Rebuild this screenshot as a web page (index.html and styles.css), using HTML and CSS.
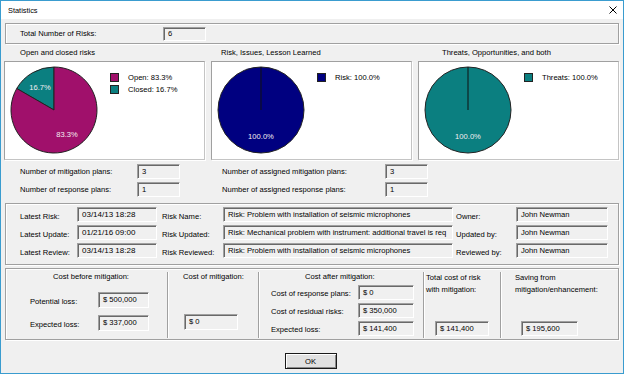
FILE: index.html
```html
<!DOCTYPE html>
<html lang="en">
<head>
  <meta charset="UTF-8" />
  <title>Statistics</title>
  <link rel="stylesheet" href="styles.css">
</head>
<body>
  <div class="window">
    <div class="titlebar">
      <span>Statistics</span>
      <svg class="close" width="8" height="8" viewBox="0 0 8 8">
        <path d="M0.5 0.5 L7.5 7.5 M7.5 0.5 L0.5 7.5" stroke="#000" stroke-width="1" fill="none"/>
      </svg>
    </div>

    <div class="main">
      <div class="box total">
        <span class="total-label">Total Number of Risks:</span>
        <span class="field total-field">6</span>
      </div>

      <div class="charts">
        <div class="chart">
          <div class="chart-title t1">Open and closed risks</div>
          <div class="panel">
            <svg class="pie" width="104" height="97" viewBox="0 0 104 97">
              <path d="M49 48 L49 5 A43 43 0 0 0 11.76 26.5 Z" fill="#0b7f80" stroke="#222" stroke-width="1"/>
              <path d="M49 48 L11.76 26.5 A43 43 0 1 0 49 5 Z" fill="#a0106b" stroke="#222" stroke-width="1"/>
              <text x="35" y="28" class="pie-label">16.7%</text>
              <text x="62" y="75" class="pie-label">83.3%</text>
            </svg>
            <ul class="legend">
              <li><i class="swatch magenta"></i>Open: 83.3%</li>
              <li><i class="swatch teal"></i>Closed: 16.7%</li>
            </ul>
          </div>
        </div>

        <div class="chart">
          <div class="chart-title t2">Risk, Issues, Lesson Learned</div>
          <div class="panel">
            <svg class="pie" width="104" height="97" viewBox="0 0 104 97">
              <circle cx="49" cy="48" r="43" fill="#000080" stroke="#222" stroke-width="1"/>
              <path d="M49 48 L49 5" stroke="#111" stroke-width="1"/>
              <text x="49" y="77" class="pie-label">100.0%</text>
            </svg>
            <ul class="legend">
              <li><i class="swatch navy"></i>Risk: 100.0%</li>
            </ul>
          </div>
        </div>

        <div class="chart">
          <div class="chart-title t3">Threats, Opportunities, and both</div>
          <div class="panel">
            <svg class="pie" width="104" height="97" viewBox="0 0 104 97">
              <circle cx="49" cy="48" r="43" fill="#0b7f80" stroke="#222" stroke-width="1"/>
              <path d="M49 48 L49 5" stroke="#111" stroke-width="1"/>
              <text x="49" y="77" class="pie-label">100.0%</text>
            </svg>
            <ul class="legend">
              <li><i class="swatch teal"></i>Threats: 100.0%</li>
            </ul>
          </div>
        </div>
      </div>

      <div class="plans">
        <span>Number of mitigation plans:</span>
        <span class="field small">3</span>
        <span>Number of assigned mitigation plans:</span>
        <span class="field small">3</span>
        <span>Number of response plans:</span>
        <span class="field small">1</span>
        <span>Number of assigned response plans:</span>
        <span class="field small">1</span>
      </div>

      <div class="box details">
        <span>Latest Risk:</span>
        <span class="field date">03/14/13 18:28</span>
        <span>Risk Name:</span>
        <span class="field name">Risk: Problem with installation of seismic microphones</span>
        <span>Owner:</span>
        <span class="field person">John Newman</span>

        <span>Latest Update:</span>
        <span class="field date">01/21/16 09:00</span>
        <span>Risk Updated:</span>
        <span class="field name">Risk: Mechanical problem with instrument: additional travel is req</span>
        <span>Updated by:</span>
        <span class="field person">John Newman</span>

        <span>Latest Review:</span>
        <span class="field date">03/14/13 18:28</span>
        <span>Risk Reviewed:</span>
        <span class="field name">Risk: Problem with installation of seismic microphones</span>
        <span>Reviewed by:</span>
        <span class="field person">John Newman</span>
      </div>

      <div class="box costs">
        <div class="col col-before">
          <div class="col-title">Cost before mitigation:</div>
          <div class="cost-row first">
            <span class="cost-label">Potential loss:</span>
            <span class="field money">$ 500,000</span>
          </div>
          <div class="cost-row">
            <span class="cost-label">Expected loss:</span>
            <span class="field money">$ 337,000</span>
          </div>
        </div>

        <div class="col col-mitigation">
          <div class="col-title">Cost of mitigation:</div>
          <span class="field money">$ 0</span>
        </div>

        <div class="col col-after">
          <div class="col-title">Cost after mitigation:</div>
          <div class="cost-row first">
            <span class="cost-label">Cost of response plans:</span>
            <span class="field money">$ 0</span>
          </div>
          <div class="cost-row">
            <span class="cost-label">Cost of residual risks:</span>
            <span class="field money">$ 350,000</span>
          </div>
          <div class="cost-row">
            <span class="cost-label">Expected loss:</span>
            <span class="field money">$ 141,400</span>
          </div>
        </div>

        <div class="col col-total">
          <div class="col-title">Total cost of risk<br>with mitigation:</div>
          <span class="field money">$ 141,400</span>
        </div>

        <div class="col col-saving">
          <div class="col-title">Saving from<br>mitigation/enhancement:</div>
          <span class="field money">$ 195,600</span>
        </div>
      </div>

      <div class="buttons">
        <button class="ok">OK</button>
      </div>
    </div>
  </div>
</body>
</html>
```

FILE: styles.css
```css
* {
  box-sizing: border-box;
}

body {
  margin: 0;
  font-family: "Liberation Sans", Arial, sans-serif;
  font-size: 7.6px;
  color: #000;
  background: #fff;
}

.window {
  width: 624px;
  height: 374px;
  border: 1px solid #3a9ccf;
  background: #f0f0f0;
}

.titlebar {
  height: 18px;
  background: #fff;
  display: flex;
  align-items: center;
  justify-content: space-between;
  padding: 0 6px 0 7px;
  font-size: 7.4px;
}

.main {
  padding: 4px 4px 0;
}

/* etched group box */
.box {
  border: 1px solid #a0a0a0;
  box-shadow: inset 1px 1px 0 #fff, 1px 1px 0 #fff;
}

/* sunken read-only edit */
.field {
  display: block;
  height: 15px;
  line-height: 13px;
  padding-left: 4px;
  white-space: nowrap;
  overflow: hidden;
  background: #f0f0f0;
  border: 1px solid;
  border-color: #a0a0a0 #fff #fff #a0a0a0;
  box-shadow: inset 1px 1px 0 #696969;
}

.total {
  height: 21px;
  display: flex;
  align-items: center;
  padding-left: 14px;
}

.total-label {
  width: 143px;
}

.total-field {
  width: 43px;
  height: 14px;
  line-height: 12px;
}

/* charts */
.charts {
  display: flex;
  gap: 6px;
  margin: 1px 0 0 -1px;
}

.chart {
  width: 201px;
}

.chart-title {
  height: 16px;
  line-height: 16px;
}

.t1 { padding-left: 16px; }
.t2 { padding-left: 10px; }
.t3 { padding-left: 24px; }

.panel {
  height: 99px;
  display: flex;
  background: #fff;
  border: 1px solid;
  border-color: #a0a0a0 #c4c4c4 #c4c4c4 #a0a0a0;
  box-shadow: 1px 1px 0 #fff;
}

.pie {
  display: block;
  flex: none;
}

.pie-label {
  font-family: "Liberation Sans", Arial, sans-serif;
  font-size: 7.6px;
  fill: #f4eef2;
  text-anchor: middle;
}

.legend {
  list-style: none;
  margin: 0;
  padding: 9px 0 0 1px;
}

.legend li {
  height: 12px;
  display: flex;
  align-items: center;
}

.swatch {
  width: 9px;
  height: 9px;
  margin-right: 9px;
  border: 1px solid #222;
}

.magenta { background: #a0106b; }
.teal { background: #0b7f80; }
.navy { background: #000080; }

/* plan counts */
.plans {
  display: grid;
  grid-template-columns: 117px 85px 163px 43px;
  grid-auto-rows: 15px;
  row-gap: 3px;
  align-items: center;
  margin-top: 4px;
  padding-left: 15px;
}

.small {
  width: 43px;
}

/* latest risk details */
.details {
  height: 62px;
  margin-top: 6px;
  padding: 3px 0 0 14px;
  display: grid;
  grid-template-columns: 57px 85px 61px 233px 60px 92px;
  grid-auto-rows: 15px;
  row-gap: 3px;
  align-items: center;
}

.details > span:not(.field) {
  padding-top: 3px;
}

.date {
  width: 80px;
  font-size: 8px;
}

.name {
  width: 230px;
}

.person {
  width: 92px;
}

/* costs */
.costs {
  height: 72px;
  margin-top: 3px;
  padding: 3px 0 1px;
  display: flex;
}

.col {
  height: 100%;
  border-right: 1px solid #a0a0a0;
  box-shadow: 1px 0 0 #fff;
}

.col-title {
  line-height: 10px;
}

.col-before { width: 162px; }
.col-mitigation { width: 91px; }
.col-after { width: 165px; }
.col-total { width: 77px; }
.col-saving { flex: 1; border-right: none; box-shadow: none; }

.cost-row {
  display: flex;
  align-items: center;
}

.money {
  height: 16px;
  line-height: 14px;
}

.col-before .col-title { padding-left: 47px; }
.col-before .cost-row { margin-top: 7px; padding-left: 24px; }
.col-before .cost-row.first { margin-top: 10px; }
.col-before .cost-label { width: 68px; padding-top: 2px; }
.col-before .money { width: 51px; }

.col-mitigation .col-title { padding-left: 15px; }
.col-mitigation .money { width: 54px; margin: 32px 0 0 16px; }

.col-after .col-title { padding-left: 46px; }
.col-after .cost-row { margin-top: 3px; padding-left: 12px; }
.col-after .cost-label { width: 87px; padding-top: 2px; }
.col-after .money { width: 56px; height: 15px; line-height: 13px; }

.col-total .col-title,
.col-saving .col-title {
  line-height: 12px;
}

.col-total .col-title { padding-left: 2px; }
.col-total .money { width: 54px; height: 15px; margin: 25px 0 0 11px; }

.col-saving .col-title { padding-left: 14px; }
.col-saving .money { width: 57px; height: 15px; margin: 25px 0 0 20px; }

/* dialog button */
.buttons {
  display: flex;
  justify-content: center;
  margin-top: 13px;
  padding-right: 3px;
}

.ok {
  width: 52px;
  height: 16px;
  padding: 0;
  font-family: inherit;
  font-size: 7.6px;
  background: #e1e1e1;
  border: 1px solid #1a1a1a;
  box-shadow: inset 1px 1px 0 #fff, inset -1px -1px 0 #8a8a8a;
}
```
